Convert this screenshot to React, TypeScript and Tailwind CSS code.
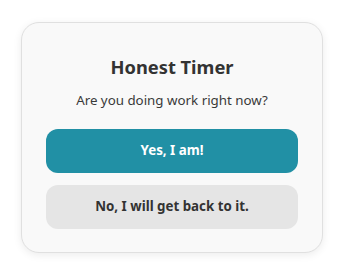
export default function App() {
  return (
    <div
      className="flex h-screen w-full items-center justify-center bg-white"
      style={{ fontFamily: '"Noto Sans", sans-serif' }}
    >
      <div className="flex w-[302px] flex-col rounded-[18px] border border-[#e0e0e0] bg-[#f9f9f9] px-6 pb-[23px] pt-[30px] text-center shadow-[0_2px_8px_rgba(0,0,0,0.08)]">
        <h1 className="text-[18.3px] font-bold leading-[28px] text-[#333333]">
          Honest Timer
        </h1>
        <p className="mt-[9px] text-[13.333px] leading-[20px] text-[#3a3a3a]">
          Are you doing work right now?
        </p>
        <div className="mt-[19px] flex flex-col gap-3">
          <button className="h-11 rounded-xl bg-[#2190a5] text-[13.333px] font-bold text-white">
            Yes, I am!
          </button>
          <button className="h-11 rounded-xl bg-[#e5e5e5] text-[13.333px] font-bold text-[#333333]">
            No, I will get back to it.
          </button>
        </div>
      </div>
    </div>
  );
}
